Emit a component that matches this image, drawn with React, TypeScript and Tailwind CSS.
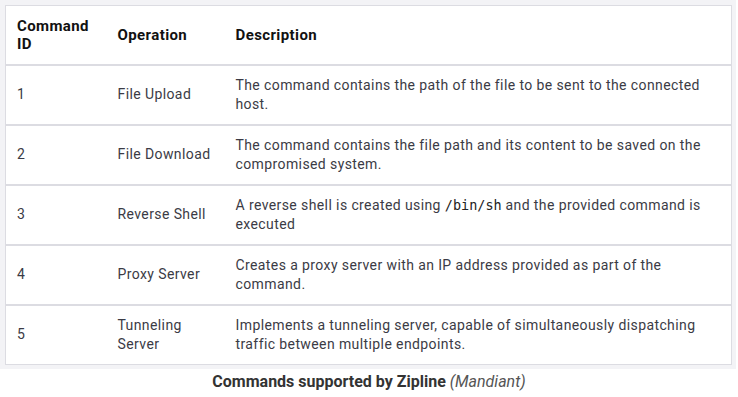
import React from 'react';

const rows = [
  { id: '1', op: 'File Upload', desc: <>The command contains the path of the file to be sent to the connected host.</> },
  { id: '2', op: 'File Download', desc: <>The command contains the file path and its content to be saved on the compromised system.</> },
  {
    id: '3',
    op: 'Reverse Shell',
    desc: (
      <>
        A reverse shell is created using{' '}
        <code className="font-['DejaVu_Sans_Mono',monospace] text-[13.5px] tracking-normal text-[#222]">/bin/sh</code>{' '}
        and the provided command is executed
      </>
    ),
  },
  { id: '4', op: 'Proxy Server', desc: <>Creates a proxy server with an IP address provided as part of the command.</> },
  { id: '5', op: 'Tunneling Server', desc: <>Implements a tunneling server, capable of simultaneously dispatching traffic between multiple endpoints.</> },
];

export default function App() {
  return (
    <div className="w-[738px] h-[397px] bg-white font-['Roboto',sans-serif]">
      <div className="w-[736px] bg-[#f3f3f6] pt-[5px] pb-[4px] pl-[5px] pr-[4px]">
        <table className="w-[727px] table-fixed border-collapse bg-white text-[14px] tracking-[0.4px] text-[#3b3b45] border border-[#dcdce2]">
          <colgroup>
            <col className="w-[101px]" />
            <col className="w-[119px]" />
            <col />
          </colgroup>
          <thead>
            <tr className="h-[59px] border-b-2 border-[#dcdce2] text-left text-[15px]">
              <th className="pl-[11px] pr-3 align-middle font-bold leading-[18px] text-[#111]">Command ID</th>
              <th className="pl-[11px] align-middle font-bold text-[#111]">Operation</th>
              <th className="pl-[10px] align-middle font-bold text-[#111]">Description</th>
            </tr>
          </thead>
          <tbody>
            {rows.map((r, i) => (
              <tr key={r.id} className={`h-[60px] ${i < rows.length - 1 ? 'border-b-2 border-[#dcdce2]' : ''}`}>
                <td className="pl-[11px] align-middle">{r.id}</td>
                <td className="pl-[11px] pr-2 align-middle leading-[19px]">{r.op}</td>
                <td className="pl-[10px] pr-6 align-middle leading-[19px]">{r.desc}</td>
              </tr>
            ))}
          </tbody>
        </table>
      </div>
      <p className="mt-[1px] text-center text-[16px] text-[#333] font-['Roboto',sans-serif]">
        <span className="font-bold">Commands supported by Zipline</span>{' '}
        <em className="text-[#555]">(Mandiant)</em>
      </p>
    </div>
  );
}
